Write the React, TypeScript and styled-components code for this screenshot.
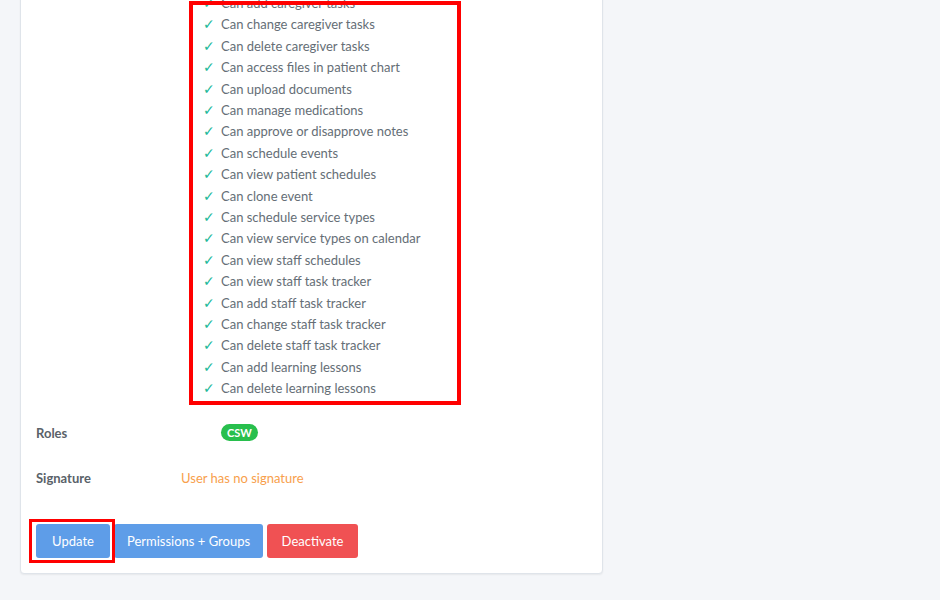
import React from 'react'
import styled, { createGlobalStyle } from 'styled-components';

const GlobalStyle = createGlobalStyle`
  html, body {
    margin: 0;
    padding: 0;
    background: #f4f6f9;
    overflow: hidden;
  }
  body {
    font-family: Lato, "Liberation Sans", sans-serif;
    font-size: 13px;
    color: #6c757d;
  }
`

const permissions = [
  'Can view patients',
  'Can add patients',
  'Can change patients',
  'Can view caregiver tasks',
  'Can add caregiver tasks',
  'Can change caregiver tasks',
  'Can delete caregiver tasks',
  'Can access files in patient chart',
  'Can upload documents',
  'Can manage medications',
  'Can approve or disapprove notes',
  'Can schedule events',
  'Can view patient schedules',
  'Can clone event',
  'Can schedule service types',
  'Can view service types on calendar',
  'Can view staff schedules',
  'Can view staff task tracker',
  'Can add staff task tracker',
  'Can change staff task tracker',
  'Can delete staff task tracker',
  'Can add learning lessons',
  'Can delete learning lessons',
]

const App: React.FC = () => {
  return (
    <>
      <GlobalStyle />
      <Page>
        <Card>
          <DetailRow>
            <Label>Permissions</Label>
            <Value>
              <PermList>
                {permissions.map((p) => (
                  <PermItem key={p}>
                    <Check>✓</Check>
                    {p}
                  </PermItem>
                ))}
                <Highlight $top={94} $left={-14} $right={-8} $bottom={-6} $width={4} />
              </PermList>
            </Value>
          </DetailRow>

          <DetailRow>
            <Label>Roles</Label>
            <Value>
              <Badge>CSW</Badge>
            </Value>
          </DetailRow>

          <DetailRow>
            <Label>Signature</Label>
            <Value>
              <Warning>User has no signature</Warning>
            </Value>
          </DetailRow>

          <Actions>
            <Marked>
              <Button $color="#5e9de8" $width={74}>Update</Button>
              <Highlight $top={-5} $left={-7} $right={-5} $bottom={-5} $width={3} />
            </Marked>
            <Button $color="#5e9de8" $width={149}>Permissions + Groups</Button>
            <Button $color="#f05153" $width={91}>Deactivate</Button>
          </Actions>
        </Card>
      </Page>
    </>
  )
}

export default App

const Page = styled.div`
  padding: 0 0 27px 20px;
  margin-top: -120.7px;
`

const Card = styled.div`
  box-sizing: border-box;
  width: 583px;
  background: #fff;
  border: 1px solid #dfe4ea;
  border-radius: 4px;
  box-shadow: 0 1px 2px rgba(0, 0, 0, 0.06);
  padding: 15px 15px 15px 15px;
`

const DetailRow = styled.div`
  display: flex;
  padding: 12px 0;
  line-height: 21px;
`

const Label = styled.div`
  width: 145px;
  flex-shrink: 0;
  font-weight: 700;
  color: #5a6269;
`

const Value = styled.div`
  flex: 1;
`

const PermList = styled.ul`
  position: relative;
  list-style: none;
  margin: 0 0 0 22px;
  padding: 0;
  width: 250px;
`

const PermItem = styled.li`
  display: flex;
  align-items: center;
  height: 21.4px;
  color: #656e76;
  white-space: nowrap;
`

const Check = styled.span`
  width: 18px;
  flex-shrink: 0;
  font-family: "DejaVu Sans", sans-serif;
  font-size: 14px;
  font-weight: 700;
  color: #22b99a;
`

const Badge = styled.span`
  display: inline-block;
  margin-left: 40px;
  padding: 0 6px;
  height: 17px;
  line-height: 17px;
  border-radius: 9px;
  background: #28bf4d;
  color: #fff;
  font-size: 11px;
  font-weight: 700;
  vertical-align: 1px;
`

const Warning = styled.span`
  color: #f8a04c;
`

const Actions = styled.div`
  display: flex;
  gap: 4px;
  margin-top: 23px;
`

const Marked = styled.div`
  position: relative;
  display: flex;
`

const Button = styled.button<{ $color: string; $width: number }>`
  width: ${(p) => p.$width}px;
  height: 34px;
  padding: 0;
  border: none;
  border-radius: 3px;
  background: ${(p) => p.$color};
  color: #fff;
  font-family: inherit;
  font-size: 13px;
`

const Highlight = styled.div<{ $top: number; $left: number; $right: number; $bottom: number; $width: number }>`
  position: absolute;
  top: ${(p) => p.$top}px;
  left: ${(p) => p.$left}px;
  right: ${(p) => p.$right}px;
  bottom: ${(p) => p.$bottom}px;
  border: ${(p) => p.$width}px solid #f00;
  pointer-events: none;
`
